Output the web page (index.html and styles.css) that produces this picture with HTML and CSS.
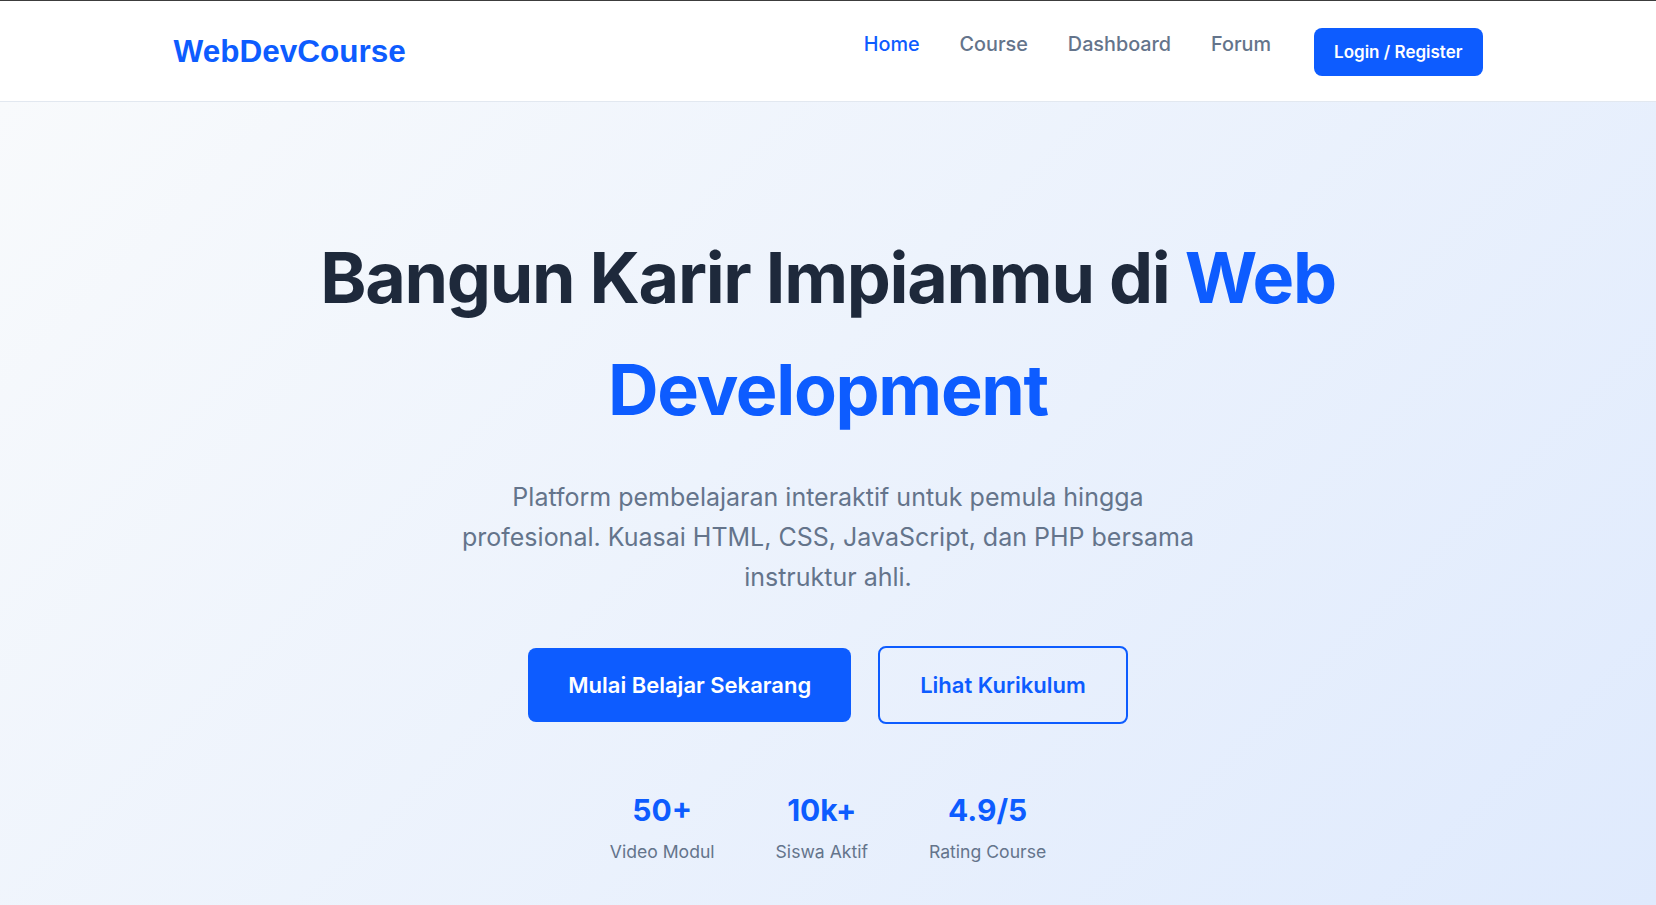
FILE: index.html
```html
<!DOCTYPE html>
<html lang="id">
<head>
<meta charset="utf-8">
<title>WebDevCourse</title>
<link rel="stylesheet" href="styles.css">
</head>
<body>
<header class="site-header">
  <div class="container nav-bar">
    <a class="logo" href="#">WebDevCourse</a>
    <nav class="nav">
      <a class="nav-link active" href="#">Home</a>
      <a class="nav-link" href="#">Course</a>
      <a class="nav-link" href="#">Dashboard</a>
      <a class="nav-link" href="#">Forum</a>
      <a class="btn-login" href="#">Login / Register</a>
    </nav>
  </div>
</header>
<section class="hero">
  <h1 class="hero-title">Bangun Karir Impianmu di <span class="accent">Web Development</span></h1>
  <p class="hero-text">Platform pembelajaran interaktif untuk pemula hingga profesional. Kuasai HTML, CSS, JavaScript, dan PHP bersama instruktur ahli.</p>
  <div class="hero-actions">
    <a class="btn btn-primary" href="#">Mulai Belajar Sekarang</a>
    <a class="btn btn-outline" href="#">Lihat Kurikulum</a>
  </div>
  <div class="stats">
    <div class="stat"><div class="stat-num">50+</div><div class="stat-label">Video Modul</div></div>
    <div class="stat"><div class="stat-num">10k+</div><div class="stat-label">Siswa Aktif</div></div>
    <div class="stat"><div class="stat-num">4.9/5</div><div class="stat-label">Rating Course</div></div>
  </div>
</section>
</body>
</html>
```

FILE: styles.css
```css
* { box-sizing: border-box; }
html, body { margin: 0; padding: 0; }
body {
  font-family: Inter, "Noto Sans", sans-serif;
  color: #1e293b;
  background: #eef4fe;
  border-top: 1px solid #3c3c3c;
  height: 905px;
  overflow: hidden;
}
a { text-decoration: none; }

.site-header {
  background: #ffffff;
  border-bottom: 1px solid #e2e8f0;
}
.container {
  max-width: 1309px;
  margin: 0 auto;
}
.nav-bar {
  height: 100px;
  display: flex;
  align-items: center;
  justify-content: space-between;
}
.logo {
  font-family: "Liberation Sans", Arial, sans-serif;
  font-weight: 700;
  font-size: 31.5px;
  color: #0d5cff;
  margin-top: 1px;
}
.nav {
  display: flex;
  align-items: center;
  gap: 40px;
}
.nav-link {
  font-size: 19.8px;
  font-weight: 500;
  color: #64748b;
  padding-bottom: 15px;
}
.nav-link.active { color: #0d5cff; }
.btn-login {
  background: #0d5cff;
  color: #ffffff;
  font-size: 17px;
  font-weight: 600;
  line-height: 24px;
  padding: 12px 20px;
  border-radius: 8px;
  margin-top: 1px;
  margin-left: 3px;
}

.hero {
  min-height: 804px;
  background: linear-gradient(135deg, #f8fafc 0%, #dfeafd 100%);
  text-align: center;
  padding-top: 120px;
}
.hero-title {
  margin: 0 auto;
  font-size: 70px;
  font-weight: 700;
  line-height: 1.6;
  letter-spacing: -1.3px;
  max-width: 1100px;
  color: #1e293b;
}
.accent { color: #0d5cff; }
.hero-text {
  max-width: 750px;
  margin: 31px auto 0;
  font-size: 25px;
  line-height: 40px;
  color: #64748b;
}
.hero-actions {
  margin-top: 49px;
  display: flex;
  justify-content: center;
  align-items: center;
  gap: 27px;
}
.btn {
  font-size: 22px;
  font-weight: 600;
  line-height: 34px;
  border-radius: 8px;
  padding: 20px 40px;
}
.btn-primary {
  background: #0d5cff;
  color: #ffffff;
}
.btn-outline {
  border: 2px solid #0d5cff;
  color: #0d5cff;
  background: transparent;
}
.stats {
  margin-top: 68px;
  display: flex;
  justify-content: center;
  gap: 61px;
}
.stat {
  display: flex;
  flex-direction: column;
  align-items: center;
}
.stat-num {
  font-size: 30px;
  font-weight: 700;
  color: #0d5cff;
  line-height: 1.2;
}
.stat-label {
  margin-top: 13px;
  font-size: 17.6px;
  color: #64748b;
}
```
